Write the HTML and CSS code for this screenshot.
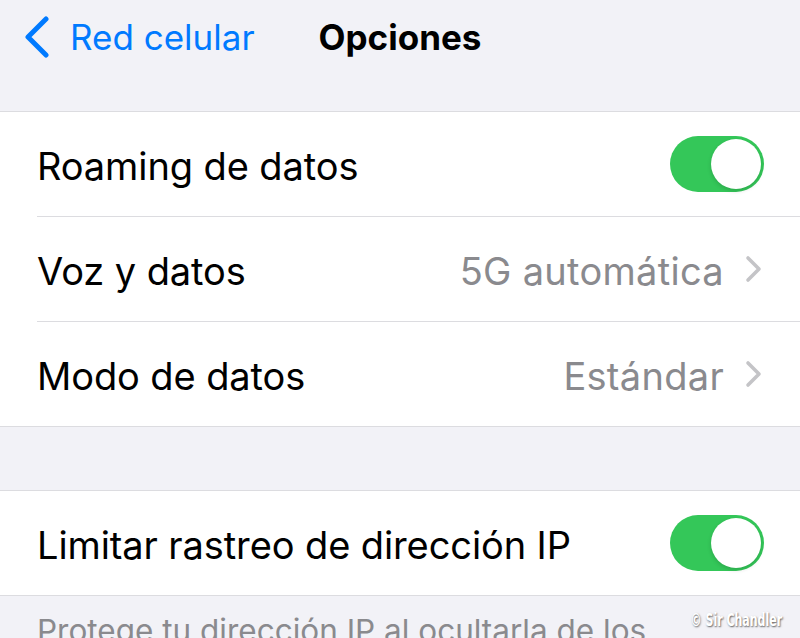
FILE: index.html
```html
<!DOCTYPE html>
<html lang="es">
<head>
  <meta charset="UTF-8">
  <meta name="viewport" content="width=device-width, initial-scale=1.0">
  <title>Opciones</title>
  <link rel="stylesheet" href="styles.css">
</head>
<body>
  <header class="navbar">
    <a class="back" href="#">
      <svg class="back-icon" width="26" height="42" viewBox="0 0 26 42">
        <path d="M22 3 L4 21 L22 39" fill="none" stroke="#007aff" stroke-width="5" stroke-linecap="round" stroke-linejoin="round"/>
      </svg>
      <span>Red celular</span>
    </a>
    <h1 class="title">Opciones</h1>
  </header>

  <section class="group">
    <div class="row">
      <span class="label">Roaming de datos</span>
      <span class="switch on"><span class="knob"></span></span>
    </div>
    <div class="row">
      <span class="label">Voz y datos</span>
      <span class="value">5G automática</span>
      <svg class="chevron" width="20" height="30" viewBox="0 0 20 30">
        <path d="M4 4 L15 15 L4 26" fill="none" stroke="#c4c4c7" stroke-width="3.6" stroke-linecap="round" stroke-linejoin="round"/>
      </svg>
    </div>
    <div class="row">
      <span class="label">Modo de datos</span>
      <span class="value">Estándar</span>
      <svg class="chevron" width="20" height="30" viewBox="0 0 20 30">
        <path d="M4 4 L15 15 L4 26" fill="none" stroke="#c4c4c7" stroke-width="3.6" stroke-linecap="round" stroke-linejoin="round"/>
      </svg>
    </div>
  </section>

  <section class="group second">
    <div class="row">
      <span class="label">Limitar rastreo de dirección IP</span>
      <span class="switch on"><span class="knob"></span></span>
    </div>
  </section>

  <p class="footer">Protege tu dirección IP al ocultarla de los rastreadores conocidos en Mail y Safari.</p>

  <div class="watermark">© Sir Chandler</div>
</body>
</html>
```

FILE: styles.css
```css
body {
  font-family: Inter, "Liberation Sans", Arial, sans-serif;
  margin: 0;
  padding: 0;
  background-color: #f2f2f7;
  color: #000;
  width: 800px;
  height: 638px;
  overflow: hidden;
  position: relative;
}

.navbar {
  height: 111px;
  display: flex;
  align-items: flex-start;
  padding-top: 16px;
  box-sizing: border-box;
}

.back {
  display: flex;
  align-items: center;
  color: #007aff;
  text-decoration: none;
  font-size: 35px;
  margin-left: 24px;
  height: 42px;
}

.back-icon {
  margin-right: 20px;
}

.title {
  margin: 0 0 0 64px;
  font-size: 35px;
  font-weight: 700;
  line-height: 42px;
  height: 42px;
}

.group {
  background-color: #fff;
  border-top: 1px solid #dcdce0;
  border-bottom: 1px solid #dcdce0;
}

.second {
  margin-top: 63px;
}

.row {
  display: flex;
  align-items: center;
  height: 104px;
  margin-left: 37px;
  padding-right: 36px;
  font-size: 38px;
}

.row + .row {
  border-top: 1px solid #dcdce0;
}

.label {
  flex-grow: 1;
  padding-top: 4px;
  letter-spacing: -0.1px;
}

.value {
  color: #8a8a8e;
  margin-right: 20px;
  padding-top: 4px;
  letter-spacing: 0.3px;
}

.switch {
  width: 94px;
  height: 56px;
  border-radius: 28px;
  background-color: #34c759;
  display: flex;
  align-items: center;
  justify-content: flex-end;
  padding: 0 3px;
  box-sizing: border-box;
}

.knob {
  width: 50px;
  height: 50px;
  border-radius: 50%;
  background-color: #fff;
  box-shadow: 0 2px 4px rgba(0, 0, 0, 0.15);
}

.footer {
  margin: 16px 0 0 37px;
  padding-right: 36px;
  font-size: 31.5px;
  line-height: 1.2;
  color: #8a8a8e;
}

.watermark {
  position: absolute;
  right: 18px;
  top: 610px;
  font-family: "DejaVu Sans Condensed", "Liberation Sans", sans-serif;
  font-weight: 700;
  font-size: 17px;
  color: #fff;
  text-shadow: 1px 1px 2px rgba(0, 0, 0, 0.6);
  transform: scaleX(0.72);
  transform-origin: right center;
}
```
